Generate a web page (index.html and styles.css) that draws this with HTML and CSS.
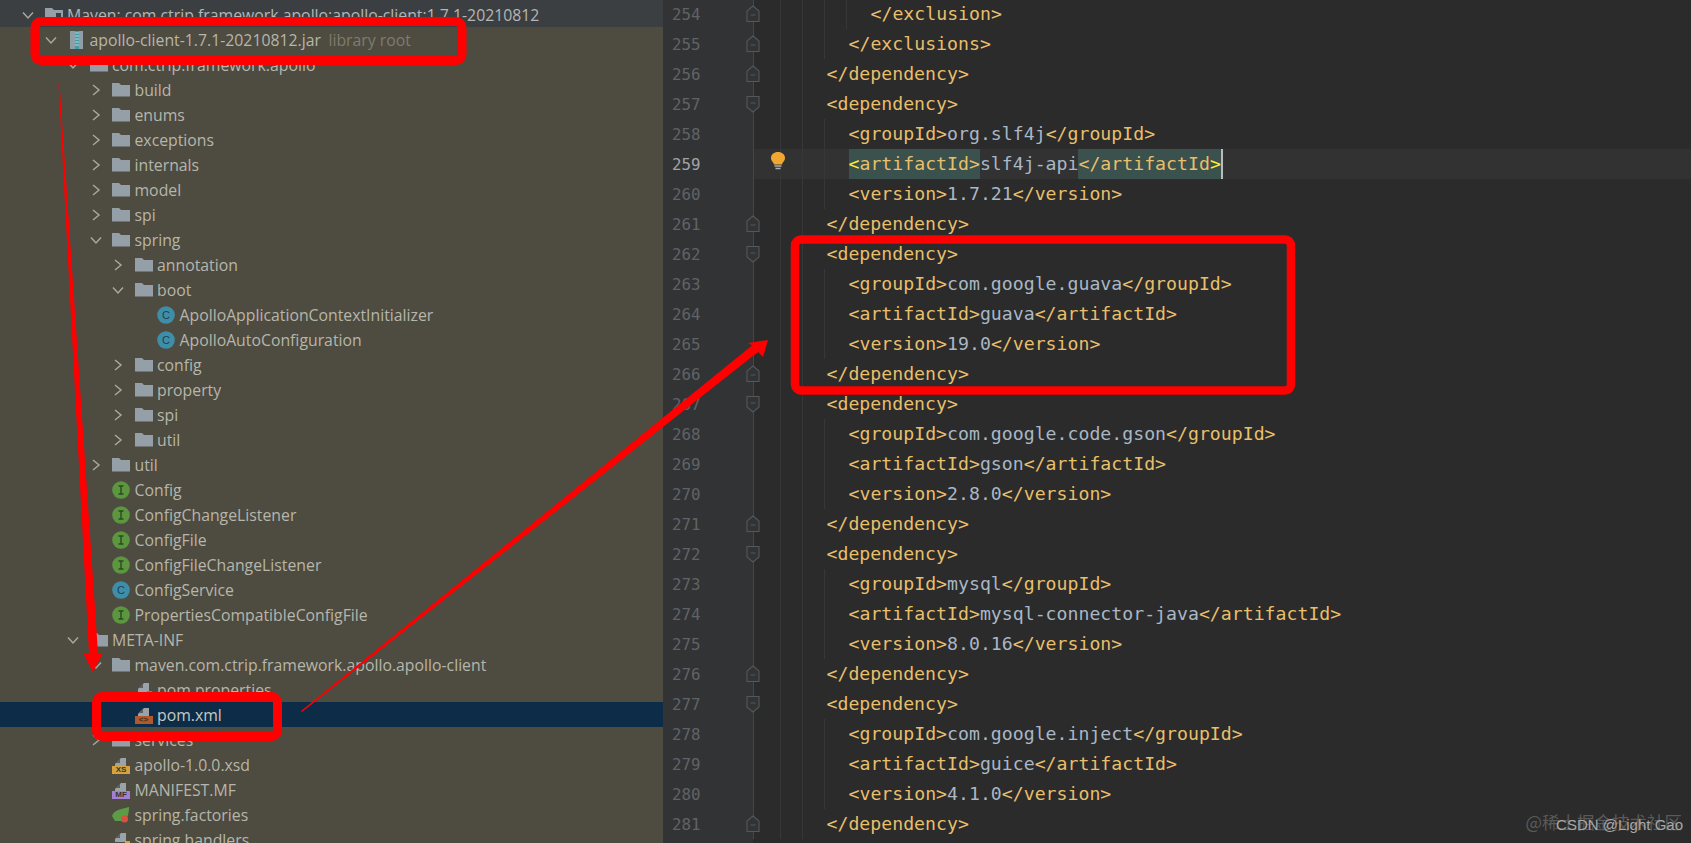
FILE: index.html
```html
<!DOCTYPE html>
<html lang="en">
<head>
    <meta charset="UTF-8">
    <title>pom.xml</title>
    <link rel="stylesheet" href="styles.css">
</head>
<body>

<!-- icon set -->
<svg class="defs" width="0" height="0">
    <symbol id="right" viewBox="0 0 16 16"><path d="M5 3 L11 8 L5 13" fill="none" stroke="#a8a89e" stroke-width="1.5"/></symbol>
    <symbol id="down" viewBox="0 0 16 16"><path d="M3 5.5 L8 11 L13 5.5" fill="none" stroke="#a8a89e" stroke-width="1.5"/></symbol>
    <symbol id="folder" viewBox="0 0 18 18"><path d="M0 2 H7 L9 4 H18 V15.5 H0 Z" fill="#959fa7"/></symbol>
    <symbol id="modulo" viewBox="0 0 18 18"><path d="M0 2 H7 L9 4 H18 V15.5 H0 Z" fill="#959fa7"/><path d="M11 7 H16 V13 H11 Z M13.5 7 V13" fill="#3c3f41"/></symbol>
    <symbol id="jar" viewBox="0 0 18 18"><rect x="3" y="0" width="13" height="18" fill="#8f9fa8"/><rect x="8" y="0" width="4" height="18" fill="#3f9ba8"/><path d="M8 2 H12 M8 5 H12 M8 8 H12 M8 11 H12 M8 14 H12" stroke="#c3d6d8" stroke-width="1"/></symbol>
    <symbol id="class" viewBox="0 0 18 18"><circle cx="9" cy="9" r="8.8" fill="#3f8ea9"/><text x="9" y="13" text-anchor="middle" font-family="Liberation Sans" font-size="11" fill="#20414f">C</text></symbol>
    <symbol id="iface" viewBox="0 0 18 18"><circle cx="9" cy="9" r="8.8" fill="#5c973f"/><path d="M6.5 5 H11.5 M9 5 V13 M6.5 13 H11.5" stroke="#2a4a22" stroke-width="1.4" fill="none"/></symbol>
    <symbol id="doc" viewBox="0 0 18 18"><path d="M3 8 L9 2 H14 V11 H3 Z" fill="#9aa3aa"/><path d="M3.5 7 L8 2.5 V7 Z" fill="#5b5f5e"/></symbol>
    <symbol id="leaf" viewBox="0 0 18 18"><path d="M0 10 C2 4 9 3 17 1 C17 7 16 13 11 15 H3 Z" fill="#5c9c46"/><circle cx="12.5" cy="13" r="3.6" fill="#d8503f"/></symbol>
    <symbol id="fold-up" viewBox="0 0 14 18"><path d="M7 1 L13 6 V16.5 H1 V6 Z M4.5 10 H9.5" fill="#313335" stroke="#55585a" stroke-width="1.1"/></symbol>
    <symbol id="fold-down" viewBox="0 0 14 18"><path d="M1 1.5 H13 V12 L7 17 L1 12 Z M4.5 8 H9.5" fill="#313335" stroke="#55585a" stroke-width="1.1"/></symbol>
</svg>

<div class="pantalla">

    <!-- project tree -->
    <div class="arbol">
        <div class="fila cabecera n0"><svg class="chev"><use href="#down"/></svg><svg class="ico"><use href="#modulo"/></svg><span>Maven: com.ctrip.framework.apollo:apollo-client:1.7.1-20210812</span></div>
        <div class="fila n1"><svg class="chev"><use href="#down"/></svg><svg class="ico"><use href="#jar"/></svg><span>apollo-client-1.7.1-20210812.jar</span><span class="nota">library root</span></div>
        <div class="fila n2"><svg class="chev"><use href="#down"/></svg><svg class="ico"><use href="#folder"/></svg><span>com.ctrip.framework.apollo</span></div>
        <div class="fila n3"><svg class="chev"><use href="#right"/></svg><svg class="ico"><use href="#folder"/></svg><span>build</span></div>
        <div class="fila n3"><svg class="chev"><use href="#right"/></svg><svg class="ico"><use href="#folder"/></svg><span>enums</span></div>
        <div class="fila n3"><svg class="chev"><use href="#right"/></svg><svg class="ico"><use href="#folder"/></svg><span>exceptions</span></div>
        <div class="fila n3"><svg class="chev"><use href="#right"/></svg><svg class="ico"><use href="#folder"/></svg><span>internals</span></div>
        <div class="fila n3"><svg class="chev"><use href="#right"/></svg><svg class="ico"><use href="#folder"/></svg><span>model</span></div>
        <div class="fila n3"><svg class="chev"><use href="#right"/></svg><svg class="ico"><use href="#folder"/></svg><span>spi</span></div>
        <div class="fila n3"><svg class="chev"><use href="#down"/></svg><svg class="ico"><use href="#folder"/></svg><span>spring</span></div>
        <div class="fila n4"><svg class="chev"><use href="#right"/></svg><svg class="ico"><use href="#folder"/></svg><span>annotation</span></div>
        <div class="fila n4"><svg class="chev"><use href="#down"/></svg><svg class="ico"><use href="#folder"/></svg><span>boot</span></div>
        <div class="fila n5"><i class="chev"></i><svg class="ico"><use href="#class"/></svg><span>ApolloApplicationContextInitializer</span></div>
        <div class="fila n5"><i class="chev"></i><svg class="ico"><use href="#class"/></svg><span>ApolloAutoConfiguration</span></div>
        <div class="fila n4"><svg class="chev"><use href="#right"/></svg><svg class="ico"><use href="#folder"/></svg><span>config</span></div>
        <div class="fila n4"><svg class="chev"><use href="#right"/></svg><svg class="ico"><use href="#folder"/></svg><span>property</span></div>
        <div class="fila n4"><svg class="chev"><use href="#right"/></svg><svg class="ico"><use href="#folder"/></svg><span>spi</span></div>
        <div class="fila n4"><svg class="chev"><use href="#right"/></svg><svg class="ico"><use href="#folder"/></svg><span>util</span></div>
        <div class="fila n3"><svg class="chev"><use href="#right"/></svg><svg class="ico"><use href="#folder"/></svg><span>util</span></div>
        <div class="fila n3"><i class="chev"></i><svg class="ico"><use href="#iface"/></svg><span>Config</span></div>
        <div class="fila n3"><i class="chev"></i><svg class="ico"><use href="#iface"/></svg><span>ConfigChangeListener</span></div>
        <div class="fila n3"><i class="chev"></i><svg class="ico"><use href="#iface"/></svg><span>ConfigFile</span></div>
        <div class="fila n3"><i class="chev"></i><svg class="ico"><use href="#iface"/></svg><span>ConfigFileChangeListener</span></div>
        <div class="fila n3"><i class="chev"></i><svg class="ico"><use href="#class"/></svg><span>ConfigService</span></div>
        <div class="fila n3"><i class="chev"></i><svg class="ico"><use href="#iface"/></svg><span>PropertiesCompatibleConfigFile</span></div>
        <div class="fila n2"><svg class="chev"><use href="#down"/></svg><svg class="ico"><use href="#folder"/></svg><span>META-INF</span></div>
        <div class="fila n3"><svg class="chev"><use href="#down"/></svg><svg class="ico"><use href="#folder"/></svg><span>maven.com.ctrip.framework.apollo.apollo-client</span></div>
        <div class="fila n4"><i class="chev"></i><span class="archivo"><svg class="ico"><use href="#doc"/></svg><b class="punto verde"></b></span><span>pom.properties</span></div>
        <div class="fila n4 activa"><i class="chev"></i><span class="archivo"><svg class="ico"><use href="#doc"/></svg><b class="tira naranja">&lt;&gt;</b></span><span>pom.xml</span></div>
        <div class="fila n3"><svg class="chev"><use href="#right"/></svg><svg class="ico"><use href="#folder"/></svg><span>services</span></div>
        <div class="fila n3"><i class="chev"></i><span class="archivo"><svg class="ico"><use href="#doc"/></svg><b class="tira amarilla">XS</b></span><span>apollo-1.0.0.xsd</span></div>
        <div class="fila n3"><i class="chev"></i><span class="archivo"><svg class="ico"><use href="#doc"/></svg><b class="tira morada">MF</b></span><span>MANIFEST.MF</span></div>
        <div class="fila n3"><i class="chev"></i><svg class="ico"><use href="#leaf"/></svg><span>spring.factories</span></div>
        <div class="fila n3"><i class="chev"></i><span class="archivo"><svg class="ico"><use href="#doc"/></svg><b class="punto ambar"></b></span><span>spring.handlers</span></div>
    </div>

    <!-- editor -->
    <div class="editor">
        <div class="linea"><span class="num">254</span><svg class="fold"><use href="#fold-up"/></svg><span class="mark"></span><span class="ind i4"></span><span class="tag">&lt;/exclusion&gt;</span></div>
        <div class="linea"><span class="num">255</span><svg class="fold"><use href="#fold-up"/></svg><span class="mark"></span><span class="ind i3"></span><span class="tag">&lt;/exclusions&gt;</span></div>
        <div class="linea"><span class="num">256</span><svg class="fold"><use href="#fold-up"/></svg><span class="mark"></span><span class="ind i2"></span><span class="tag">&lt;/dependency&gt;</span></div>
        <div class="linea"><span class="num">257</span><svg class="fold"><use href="#fold-down"/></svg><span class="mark"></span><span class="ind i2"></span><span class="tag">&lt;dependency&gt;</span></div>
        <div class="linea"><span class="num">258</span><i class="fold"></i><span class="mark"></span><span class="ind i3"></span><span class="tag">&lt;groupId&gt;</span><span class="val">org.slf4j</span><span class="tag">&lt;/groupId&gt;</span></div>
        <div class="linea actual">
            <span class="num">259</span><i class="fold"></i><span class="mark"></span><span class="ind i3"></span><span class="tag par"><em>&lt;</em>artifactId&gt;</span><span class="val">slf4j-api</span><span class="tag par">&lt;/artifactId<em>&gt;</em></span><i class="caret"></i>
            <svg class="foco" viewBox="0 0 14 18"><path d="M7 0 C3 0 0 2.5 0 6 C0 9 2.5 10 3 12.5 H11 C11.5 10 14 9 14 6 C14 2.5 11 0 7 0 Z" fill="#f0a732"/><path d="M3.5 14 H10.5 M4.5 16.5 H9.5" stroke="#a9adb0" stroke-width="1.6"/></svg>
        </div>
        <div class="linea"><span class="num">260</span><i class="fold"></i><span class="mark"></span><span class="ind i3"></span><span class="tag">&lt;version&gt;</span><span class="val">1.7.21</span><span class="tag">&lt;/version&gt;</span></div>
        <div class="linea"><span class="num">261</span><svg class="fold"><use href="#fold-up"/></svg><span class="mark"></span><span class="ind i2"></span><span class="tag">&lt;/dependency&gt;</span></div>
        <div class="linea"><span class="num">262</span><svg class="fold"><use href="#fold-down"/></svg><span class="mark"></span><span class="ind i2"></span><span class="tag">&lt;dependency&gt;</span></div>
        <div class="linea"><span class="num">263</span><i class="fold"></i><span class="mark"></span><span class="ind i3"></span><span class="tag">&lt;groupId&gt;</span><span class="val">com.google.guava</span><span class="tag">&lt;/groupId&gt;</span></div>
        <div class="linea"><span class="num">264</span><i class="fold"></i><span class="mark"></span><span class="ind i3"></span><span class="tag">&lt;artifactId&gt;</span><span class="val">guava</span><span class="tag">&lt;/artifactId&gt;</span></div>
        <div class="linea"><span class="num">265</span><i class="fold"></i><span class="mark"></span><span class="ind i3"></span><span class="tag">&lt;version&gt;</span><span class="val">19.0</span><span class="tag">&lt;/version&gt;</span></div>
        <div class="linea"><span class="num">266</span><svg class="fold"><use href="#fold-up"/></svg><span class="mark"></span><span class="ind i2"></span><span class="tag">&lt;/dependency&gt;</span></div>
        <div class="linea"><span class="num">267</span><svg class="fold"><use href="#fold-down"/></svg><span class="mark"></span><span class="ind i2"></span><span class="tag">&lt;dependency&gt;</span></div>
        <div class="linea"><span class="num">268</span><i class="fold"></i><span class="mark"></span><span class="ind i3"></span><span class="tag">&lt;groupId&gt;</span><span class="val">com.google.code.gson</span><span class="tag">&lt;/groupId&gt;</span></div>
        <div class="linea"><span class="num">269</span><i class="fold"></i><span class="mark"></span><span class="ind i3"></span><span class="tag">&lt;artifactId&gt;</span><span class="val">gson</span><span class="tag">&lt;/artifactId&gt;</span></div>
        <div class="linea"><span class="num">270</span><i class="fold"></i><span class="mark"></span><span class="ind i3"></span><span class="tag">&lt;version&gt;</span><span class="val">2.8.0</span><span class="tag">&lt;/version&gt;</span></div>
        <div class="linea"><span class="num">271</span><svg class="fold"><use href="#fold-up"/></svg><span class="mark"></span><span class="ind i2"></span><span class="tag">&lt;/dependency&gt;</span></div>
        <div class="linea"><span class="num">272</span><svg class="fold"><use href="#fold-down"/></svg><span class="mark"></span><span class="ind i2"></span><span class="tag">&lt;dependency&gt;</span></div>
        <div class="linea"><span class="num">273</span><i class="fold"></i><span class="mark"></span><span class="ind i3"></span><span class="tag">&lt;groupId&gt;</span><span class="val">mysql</span><span class="tag">&lt;/groupId&gt;</span></div>
        <div class="linea"><span class="num">274</span><i class="fold"></i><span class="mark"></span><span class="ind i3"></span><span class="tag">&lt;artifactId&gt;</span><span class="val">mysql-connector-java</span><span class="tag">&lt;/artifactId&gt;</span></div>
        <div class="linea"><span class="num">275</span><i class="fold"></i><span class="mark"></span><span class="ind i3"></span><span class="tag">&lt;version&gt;</span><span class="val">8.0.16</span><span class="tag">&lt;/version&gt;</span></div>
        <div class="linea"><span class="num">276</span><svg class="fold"><use href="#fold-up"/></svg><span class="mark"></span><span class="ind i2"></span><span class="tag">&lt;/dependency&gt;</span></div>
        <div class="linea"><span class="num">277</span><svg class="fold"><use href="#fold-down"/></svg><span class="mark"></span><span class="ind i2"></span><span class="tag">&lt;dependency&gt;</span></div>
        <div class="linea"><span class="num">278</span><i class="fold"></i><span class="mark"></span><span class="ind i3"></span><span class="tag">&lt;groupId&gt;</span><span class="val">com.google.inject</span><span class="tag">&lt;/groupId&gt;</span></div>
        <div class="linea"><span class="num">279</span><i class="fold"></i><span class="mark"></span><span class="ind i3"></span><span class="tag">&lt;artifactId&gt;</span><span class="val">guice</span><span class="tag">&lt;/artifactId&gt;</span></div>
        <div class="linea"><span class="num">280</span><i class="fold"></i><span class="mark"></span><span class="ind i3"></span><span class="tag">&lt;version&gt;</span><span class="val">4.1.0</span><span class="tag">&lt;/version&gt;</span></div>
        <div class="linea"><span class="num">281</span><svg class="fold"><use href="#fold-up"/></svg><span class="mark"></span><span class="ind i2"></span><span class="tag">&lt;/dependency&gt;</span></div>
    </div>

    <!-- red marks drawn over the screenshot -->
    <svg class="marcas" viewBox="0 0 1691 843">
        <rect x="35" y="21.5" width="427" height="39" rx="6" fill="none" stroke="#ff0000" stroke-width="9"/>
        <rect x="96.5" y="696.5" width="181" height="40" rx="6" fill="none" stroke="#ff0000" stroke-width="9"/>
        <rect x="795" y="239.5" width="496" height="151" rx="6" fill="none" stroke="#ff0000" stroke-width="8.5"/>
        <polygon points="58.5,83 59.5,83 98,653 103,653 93,672 83,653 89,653" fill="#ff0000"/>
        <polygon points="301,711 752,345.5 748,343 768,340 763,357 758,352 302,712" fill="#ff0000"/>
    </svg>

    <div class="sello gris">@稀土掘金技术社区</div>
    <div class="sello claro">CSDN @Light Gao</div>
</div>

</body>
</html>
```

FILE: styles.css
```css
html, body {
    margin: 0;
    height: 100%;
    overflow: hidden;
}

.defs {
    position: absolute;
}

.pantalla {
    position: relative;
    display: flex;
    height: 843px;
    background-color: #2b2b2b;
    overflow: hidden;
}

/* tree */
.arbol {
    width: 663px;
    flex-shrink: 0;
    background-color: #4e4b40;
    font-family: "Open Sans", sans-serif;
    font-size: 15.8px;
    color: #b6b6ab;
}

.fila {
    display: flex;
    align-items: center;
    height: 25px;
    white-space: nowrap;
}

.cabecera {
    height: 25px;
    padding-top: 2px;
    background-color: #3c3f41;
    color: #b4b6b6;
}

.n0 { padding-left: 20px; }
.n1 { padding-left: 42.5px; }
.n2 { padding-left: 65px; }
.n3 { padding-left: 87.5px; }
.n4 { padding-left: 110px; }
.n5 { padding-left: 132.5px; }

.chev {
    display: block;
    width: 16px;
    height: 16px;
    margin-right: 8.5px;
    flex-shrink: 0;
}

.ico {
    display: block;
    width: 18px;
    height: 18px;
    margin-right: 4.5px;
    flex-shrink: 0;
}

.nota {
    margin-left: 7.5px;
    color: #7e7c6e;
}

.activa {
    background-color: #0d2c47;
    color: #c6cac4;
}

.archivo {
    position: relative;
    display: block;
    width: 22.5px;
    height: 18px;
    flex-shrink: 0;
}

.tira {
    position: absolute;
    left: 0;
    bottom: 0;
    width: 18px;
    height: 8px;
    font-family: "Liberation Sans", sans-serif;
    font-size: 8px;
    font-weight: bold;
    line-height: 8px;
    text-align: center;
    color: #3a3528;
}

.naranja { background-color: #b3582a; }
.amarilla { background-color: #d6a13f; }
.morada { background-color: #a280d4; }

.punto {
    position: absolute;
    right: 5px;
    bottom: 3px;
    width: 5px;
    height: 5px;
}

.verde { background-color: #5c9c46; }
.ambar { background-color: #d6a13f; }

/* editor */
.editor {
    flex: 1;
    margin-top: -1px;
    background: linear-gradient(90deg, #313335 90px, #2b2b2b 90px);
    font-family: "DejaVu Sans Mono", monospace;
    font-size: 18.2px;
    color: #a9b7c6;
}

.linea {
    position: relative;
    display: flex;
    align-items: center;
    height: 30px;
    white-space: pre;
}

.num {
    width: 74px;
    padding-left: 9px;
    font-size: 15.8px;
    color: #606366;
}

.fold {
    display: block;
    width: 14px;
    height: 30px;
    padding: 6px 0;
    box-sizing: border-box;
    background: linear-gradient(#44474a, #44474a) no-repeat center / 1px 100%;
}

.mark {
    width: 20px;
}

.ind {
    align-self: stretch;
    margin-right: 2.5px;
    background: repeating-linear-gradient(90deg, #363738 0 1px, transparent 1px 22px);
}

.i2 { width: 44px; }
.i3 { width: 66px; }
.i4 { width: 88px; }

.tag {
    margin-top: -1px;
    color: #e8bf6a;
}

.val {
    margin-top: -1px;
}

.actual {
    background: linear-gradient(90deg, transparent 90px, #323232 90px);
}

.actual .num {
    color: #a4a3a3;
}

.par {
    display: flex;
    align-items: center;
    height: 30px;
    margin-top: 0;
    padding-bottom: 1px;
    box-sizing: border-box;
    background-color: #3b514d;
}

.par em {
    font-style: normal;
    color: #ffef28;
}

.caret {
    width: 2px;
    height: 30px;
    background-color: #bbbbbb;
}

.foco {
    position: absolute;
    left: 108px;
    top: 3px;
    width: 14px;
    height: 18px;
}

/* overlays */
.marcas {
    position: absolute;
    left: 0;
    top: 0;
    width: 1691px;
    height: 843px;
}

.sello {
    position: absolute;
    white-space: nowrap;
}

.gris {
    right: 9px;
    bottom: 9px;
    font-family: "Noto Sans CJK SC", sans-serif;
    font-size: 17.5px;
    color: #5a5a5a;
}

.claro {
    right: 8px;
    bottom: 10px;
    font-family: "Liberation Sans", sans-serif;
    font-size: 15px;
    color: #a8a8a8;
}
```
